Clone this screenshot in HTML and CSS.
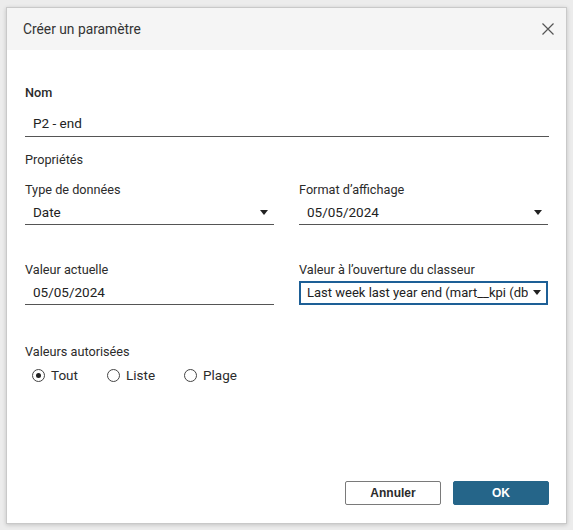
FILE: index.html
```html
<!DOCTYPE html>
<html lang="fr">
<head>
<meta charset="utf-8">
<title>Créer un paramètre</title>
<link rel="stylesheet" href="styles.css">
</head>
<body>
<div class="dialog">
  <div class="header">
    <span class="title">Créer un paramètre</span>
    <svg class="close" width="12" height="12" viewBox="0 0 12 12"><path d="M0.5 0.5 L11.5 11.5 M11.5 0.5 L0.5 11.5" stroke="#555" stroke-width="1.2" fill="none"/></svg>
  </div>
  <div class="body">
    <div class="field">
      <div class="label strong">Nom</div>
      <div class="input name">P2 - end</div>
    </div>
    <div class="section">Propriétés</div>
    <div class="grid">
      <div class="field">
        <div class="label">Type de données</div>
        <div class="input select"><span>Date</span><span class="caret"></span></div>
      </div>
      <div class="field">
        <div class="label">Format d’affichage</div>
        <div class="input select"><span>05/05/2024</span><span class="caret"></span></div>
      </div>
      <div class="field">
        <div class="label">Valeur actuelle</div>
        <div class="input">05/05/2024</div>
      </div>
      <div class="field">
        <div class="label">Valeur à l’ouverture du classeur</div>
        <div class="input select focused"><span class="clip">Last week last year end (mart__kpi (dbt_tableau))</span><span class="caret"></span></div>
      </div>
    </div>
    <div class="field allowed">
      <div class="label">Valeurs autorisées</div>
      <div class="radios">
        <label class="radio"><span class="circle checked"></span>Tout</label>
        <label class="radio"><span class="circle"></span>Liste</label>
        <label class="radio"><span class="circle"></span>Plage</label>
      </div>
    </div>
  </div>
  <div class="footer">
    <button class="btn secondary">Annuler</button>
    <button class="btn primary">OK</button>
  </div>
</div>
</body>
</html>
```
FILE: styles.css
```css
html, body {
  margin: 0;
  padding: 0;
}
body {
  background: #ececec;
  width: 573px;
  height: 530px;
  font-family: Roboto, "Liberation Sans", sans-serif;
  color: #2b2b2b;
  padding: 7px 0 0 6px;
  box-sizing: border-box;
}
.dialog {
  width: 561px;
  height: 517px;
  background: #fff;
  border: 1px solid #c9c9c9;
  box-sizing: border-box;
  box-shadow: 0 1px 4px rgba(0,0,0,0.18);
  display: flex;
  flex-direction: column;
}
.header {
  height: 42px;
  background: #f5f5f5;
  display: flex;
  align-items: center;
  justify-content: space-between;
  padding: 0 12px 0 16px;
  flex: none;
}
.title {
  font-size: 13.8px;
  color: #333;
}
.close {
  display: block;
}
.body {
  flex: 1;
  padding: 35px 17px 0 18px;
}
.field {
  display: flex;
  flex-direction: column;
}
.label {
  font-size: 12.7px;
  color: #2b2b2b;
  line-height: 15px;
}
.label.strong {
  font-weight: 500;
}
.input {
  font-size: 13.5px;
  line-height: 17px;
  padding: 7px 8px 3px 8px;
  border-bottom: 1px solid #555;
  color: #222;
}
.input.name {
  padding-top: 15px;
  padding-bottom: 4px;
}
.section {
  font-size: 12.7px;
  margin-top: 15px;
  line-height: 15px;
}
.grid {
  display: grid;
  grid-template-columns: 249px 249px;
  column-gap: 25px;
  row-gap: 37px;
  margin-top: 15px;
}
.select {
  display: flex;
  justify-content: space-between;
  align-items: center;
}
.caret {
  width: 0;
  height: 0;
  border-left: 4px solid transparent;
  border-right: 4px solid transparent;
  border-top: 5px solid #222;
  flex: none;
  margin-right: -2px;
}
.focused {
  border: 2px solid #1d5f96;
  padding: 1px 5px 2px 6px;
  margin-top: 4px;
  font-size: 13px;
}
.focused .caret {
  margin-right: 0;
}
.clip {
  overflow: hidden;
  white-space: nowrap;
  width: 221px;
}
.allowed {
  margin-top: 39px;
}
.radios {
  display: grid;
  grid-template-columns: 75px 77px auto;
  margin-top: 8px;
  padding-left: 7px;
}
.radio {
  display: flex;
  align-items: center;
  font-size: 13.5px;
  line-height: 17px;
  gap: 6px;
}
.circle {
  width: 11px;
  height: 11px;
  border: 1px solid #444;
  border-radius: 50%;
  position: relative;
  box-sizing: content-box;
}
.circle.checked::after {
  content: "";
  position: absolute;
  left: 3px;
  top: 3px;
  width: 5px;
  height: 5px;
  border-radius: 50%;
  background: #222;
}
.footer {
  display: flex;
  justify-content: flex-end;
  gap: 12px;
  padding: 0 17px 18px 0;
  flex: none;
}
.btn {
  width: 96px;
  height: 24px;
  font-family: "Liberation Sans", Arial, sans-serif;
  font-size: 12px;
  font-weight: bold;
  border-radius: 2px;
  cursor: pointer;
}
.secondary {
  background: #fff;
  border: 1px solid #7a7a7a;
  color: #2b2b2b;
}
.primary {
  background: #256589;
  border: 1px solid #256589;
  color: #fff;
}
```
